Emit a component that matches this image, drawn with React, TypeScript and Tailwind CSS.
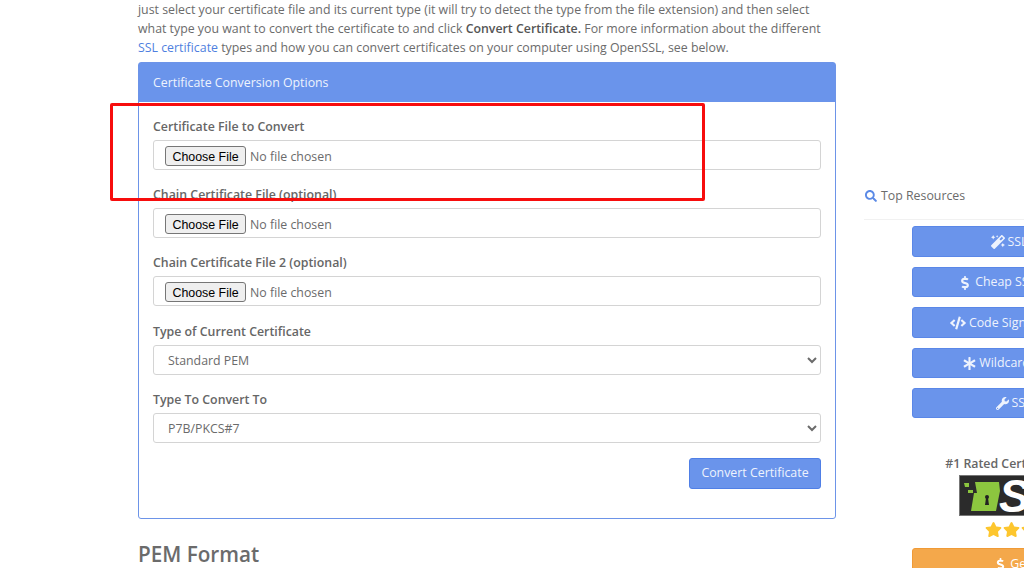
import React from "react";
import { FaAsterisk, FaCode, FaDollarSign, FaMagic, FaSearch, FaStar, FaWrench } from "react-icons/fa";

const fileFields = ["Certificate File to Convert", "Chain Certificate File (optional)", "Chain Certificate File 2 (optional)"];

const selectFields = [
  { label: "Type of Current Certificate", value: "Standard PEM" },
  { label: "Type To Convert To", value: "P7B/PKCS#7" },
];

const resources = [
  { icon: <FaMagic className="text-[14px]" />, text: "SSL Wizard", h: "h-[31px]" },
  { icon: <FaDollarSign className="text-[14px]" />, text: "Cheap SSL Certificates", h: "h-[30px]" },
  { icon: <FaCode className="text-[16px]" />, text: "Code Signing Certificates", h: "h-[31px]" },
  { icon: <FaAsterisk className="text-[13px]" />, text: "Wildcard Certificates", h: "h-[30px]" },
  { icon: <FaWrench className="text-[13px]" />, text: "SSL Tools", h: "h-[30px]" },
];

const App: React.FC = () => {
  return (
    <div className="relative flex w-[1024px] h-[568px] overflow-hidden bg-white pl-[138px] font-['Open_Sans',sans-serif] text-[#6b6b6b] text-[12.35px]">
      <main className="w-[698px] shrink-0">
        <p className="leading-[19px] whitespace-nowrap">
          just select your certificate file and its current type (it will try to detect the type from the file extension) and then select
          <br />
          what type you want to convert the certificate to and click <b className="font-semibold text-[#555]">Convert Certificate.</b> For more information about the different
          <br />
          <a className="text-[#4f7fe0]">SSL certificate</a> types and how you can convert certificates on your computer using OpenSSL, see below.
        </p>

        <section className="mt-[5px] h-[457px] rounded-[3px] border border-[#6d94e8]">
          <h2 className="flex h-[39px] items-center bg-[#6a94eb] px-[14px] pt-[2px] text-[12.35px] font-normal text-[#eef3fd]">
            Certificate Conversion Options
          </h2>
          <form className="px-[14px] pt-[16px]">
            {fileFields.map((label) => (
              <div key={label} className="mb-[16.2px]">
                <label className="mb-[4px] block h-[18px] font-semibold leading-[18px] text-[#666]">{label}</label>
                <input
                  type="file"
                  className="block h-[30px] w-full rounded-[3px] border border-[#d4d4d4] bg-white px-[11px] py-[5px] text-[12.35px] leading-[18px] text-[#6b6b6b] file:mr-1 file:h-[20px] file:w-[81px] file:rounded-[3px] file:border file:border-[#767676] file:bg-[#efefef] file:pt-[1px] file:text-center file:font-['Liberation_Sans',sans-serif] file:text-[12.4px] file:text-black"
                />
              </div>
            ))}
            {selectFields.map((field) => (
              <div key={field.label} className="mb-[16.2px]">
                <label className="mb-[4px] block h-[18px] font-semibold leading-[18px] text-[#666]">{field.label}</label>
                <select
                  defaultValue={field.value}
                  className="block h-[30px] w-full rounded-[3px] border border-[#d4d4d4] bg-white pl-[10px] pr-[4px] pt-[2px] text-[12.35px] text-[#6b6b6b]"
                >
                  <option>{field.value}</option>
                </select>
              </div>
            ))}
            <div className="mt-[-1px] flex justify-end">
              <button
                type="button"
                className="h-[31px] w-[132px] rounded-[3px] border border-[#4f7fe6] bg-[#6a94eb] text-[12.35px] text-[#eef3fd]"
              >
                Convert Certificate
              </button>
            </div>
          </form>
        </section>

        <h1 className="mt-[20px] text-[20.7px] font-semibold leading-[30px] text-[#6b6b6b]">PEM Format</h1>
      </main>

      <aside className="ml-[28px] w-[288px] shrink-0 pt-[186px]">
        <div className="flex h-[19px] items-center gap-[4px] pl-[1px] leading-[19px]">
          <FaSearch className="text-[12px] text-[#5b8ae6]" />
          <span>Top Resources</span>
        </div>
        <hr className="mt-[14px] border-[#f1f1f1]" />
        <div className="ml-[48px] mt-[6px] flex w-[237px] flex-col gap-[10px]">
          {resources.map((r) => (
            <a
              key={r.text}
              className={`flex items-center justify-center gap-[3px] rounded-[3px] border border-[#5a87e8] bg-[#6a94eb] pt-[1px] text-[#eef3fd] ${r.h}`}
            >
              {r.icon}
              <span>{r.text}</span>
            </a>
          ))}
        </div>
        <div className="ml-[48px] mt-[37px] w-[237px] text-center">
          <div className="h-[18px] pl-[7px] font-semibold leading-[18px] text-[#666]">#1 Rated Certificate Authority</div>
          <div className="ml-[47px] mt-[2px] flex h-[41px] w-[144px] items-center border border-[#777] bg-[#2b2b2b] pl-[3px]">
            <svg width="40" height="32" viewBox="0 0 40 32" className="shrink-0">
              <path d="M1 3h5v4H2z M5 10h5v3H5z" fill="#8cc63f" />
              <path d="M12 2h24l1 9-4 20H8l3-18h3z" fill="#8cc63f" />
              <circle cx="24" cy="17" r="2" fill="#222" />
              <path d="M23 18h2l1 7h-4z" fill="#222" />
            </svg>
            <span className="-ml-[4px] font-['Liberation_Sans',sans-serif] text-[46px] font-bold italic leading-[38px] text-white">SSL</span>
          </div>
          <div className="ml-[73px] mt-[3px] flex h-[20px] items-center gap-[1px] text-[17px] text-[#fdc62e]">
            <FaStar />
            <FaStar />
            <FaStar />
            <FaStar />
            <FaStar />
          </div>
          <a className="mt-[9px] flex h-[32px] items-center justify-center gap-[3px] rounded-[3px] border border-[#f09a36] bg-[#f4a84b] text-white">
            <FaDollarSign className="text-[13px]" />
            <span>Get Yours</span>
          </a>
        </div>
      </aside>

      <div className="absolute left-[110px] top-[103px] h-[98px] w-[595px] rounded-[2px] border-[3px] border-[#f70d0d]" />
    </div>
  );
};

export default App;
